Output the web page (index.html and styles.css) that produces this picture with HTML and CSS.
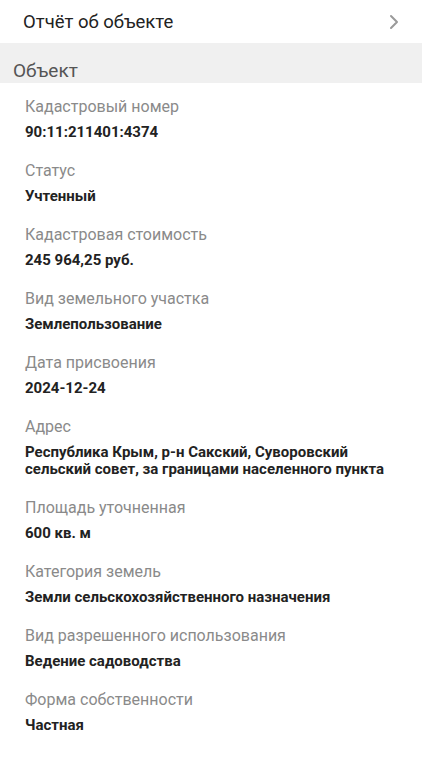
FILE: index.html
```html
<!DOCTYPE html>
<html lang="ru">
<head>
    <meta charset="UTF-8">
    <meta name="viewport" content="width=device-width, initial-scale=1.0">
    <title>Объект</title>
    <link rel="stylesheet" href="styles.css">
</head>
<body>
    <div class="report_row">
        <span class="report_title">Отчёт об объекте</span>
        <svg class="chevron" width="10" height="16" viewBox="0 0 10 16">
            <path d="M2 2 L8 8 L2 14" fill="none" stroke="#9a9a9a" stroke-width="2" stroke-linecap="round" stroke-linejoin="round"/>
        </svg>
    </div>

    <div class="section_head">Объект</div>

    <div class="fields">
        <div class="field">
            <div class="label">Кадастровый номер</div>
            <div class="value">90:11:211401:4374</div>
        </div>
        <div class="field">
            <div class="label">Статус</div>
            <div class="value">Учтенный</div>
        </div>
        <div class="field">
            <div class="label">Кадастровая стоимость</div>
            <div class="value">245 964,25 руб.</div>
        </div>
        <div class="field">
            <div class="label">Вид земельного участка</div>
            <div class="value">Землепользование</div>
        </div>
        <div class="field">
            <div class="label">Дата присвоения</div>
            <div class="value">2024-12-24</div>
        </div>
        <div class="field">
            <div class="label">Адрес</div>
            <div class="value">Республика Крым, р-н Сакский, Суворовский сельский совет, за границами населенного пункта</div>
        </div>
        <div class="field">
            <div class="label">Площадь уточненная</div>
            <div class="value">600 кв. м</div>
        </div>
        <div class="field">
            <div class="label">Категория земель</div>
            <div class="value">Земли сельскохозяйственного назначения</div>
        </div>
        <div class="field">
            <div class="label">Вид разрешенного использования</div>
            <div class="value">Ведение садоводства</div>
        </div>
        <div class="field">
            <div class="label">Форма собственности</div>
            <div class="value">Частная</div>
        </div>
    </div>
</body>
</html>
```

FILE: styles.css
```css
body {
    font-family: Roboto, "Noto Sans", Arial, sans-serif;
    margin: 0;
    padding: 0;
    background-color: #fff;
}
.report_row {
    height: 43px;
    display: flex;
    align-items: center;
    justify-content: space-between;
    padding: 0 23px 0 23px;
}
.report_title {
    font-size: 18.5px;
    color: #222;
}
.chevron {
    display: block;
}
.section_head {
    height: 40px;
    background-color: #f0f0f0;
    padding: 16px 13px 0 13px;
    box-sizing: border-box;
    font-size: 19px;
    line-height: 24px;
    color: #555;
}
.fields {
    padding: 1px 25px 0 25px;
}
.field {
    padding: 12px 0 7px 0;
}
.label {
    font-size: 16px;
    line-height: 22px;
    color: #8a8a8a;
}
.value {
    margin-top: 6px;
    font-size: 15px;
    line-height: 17px;
    font-weight: bold;
    color: #222;
}
```
